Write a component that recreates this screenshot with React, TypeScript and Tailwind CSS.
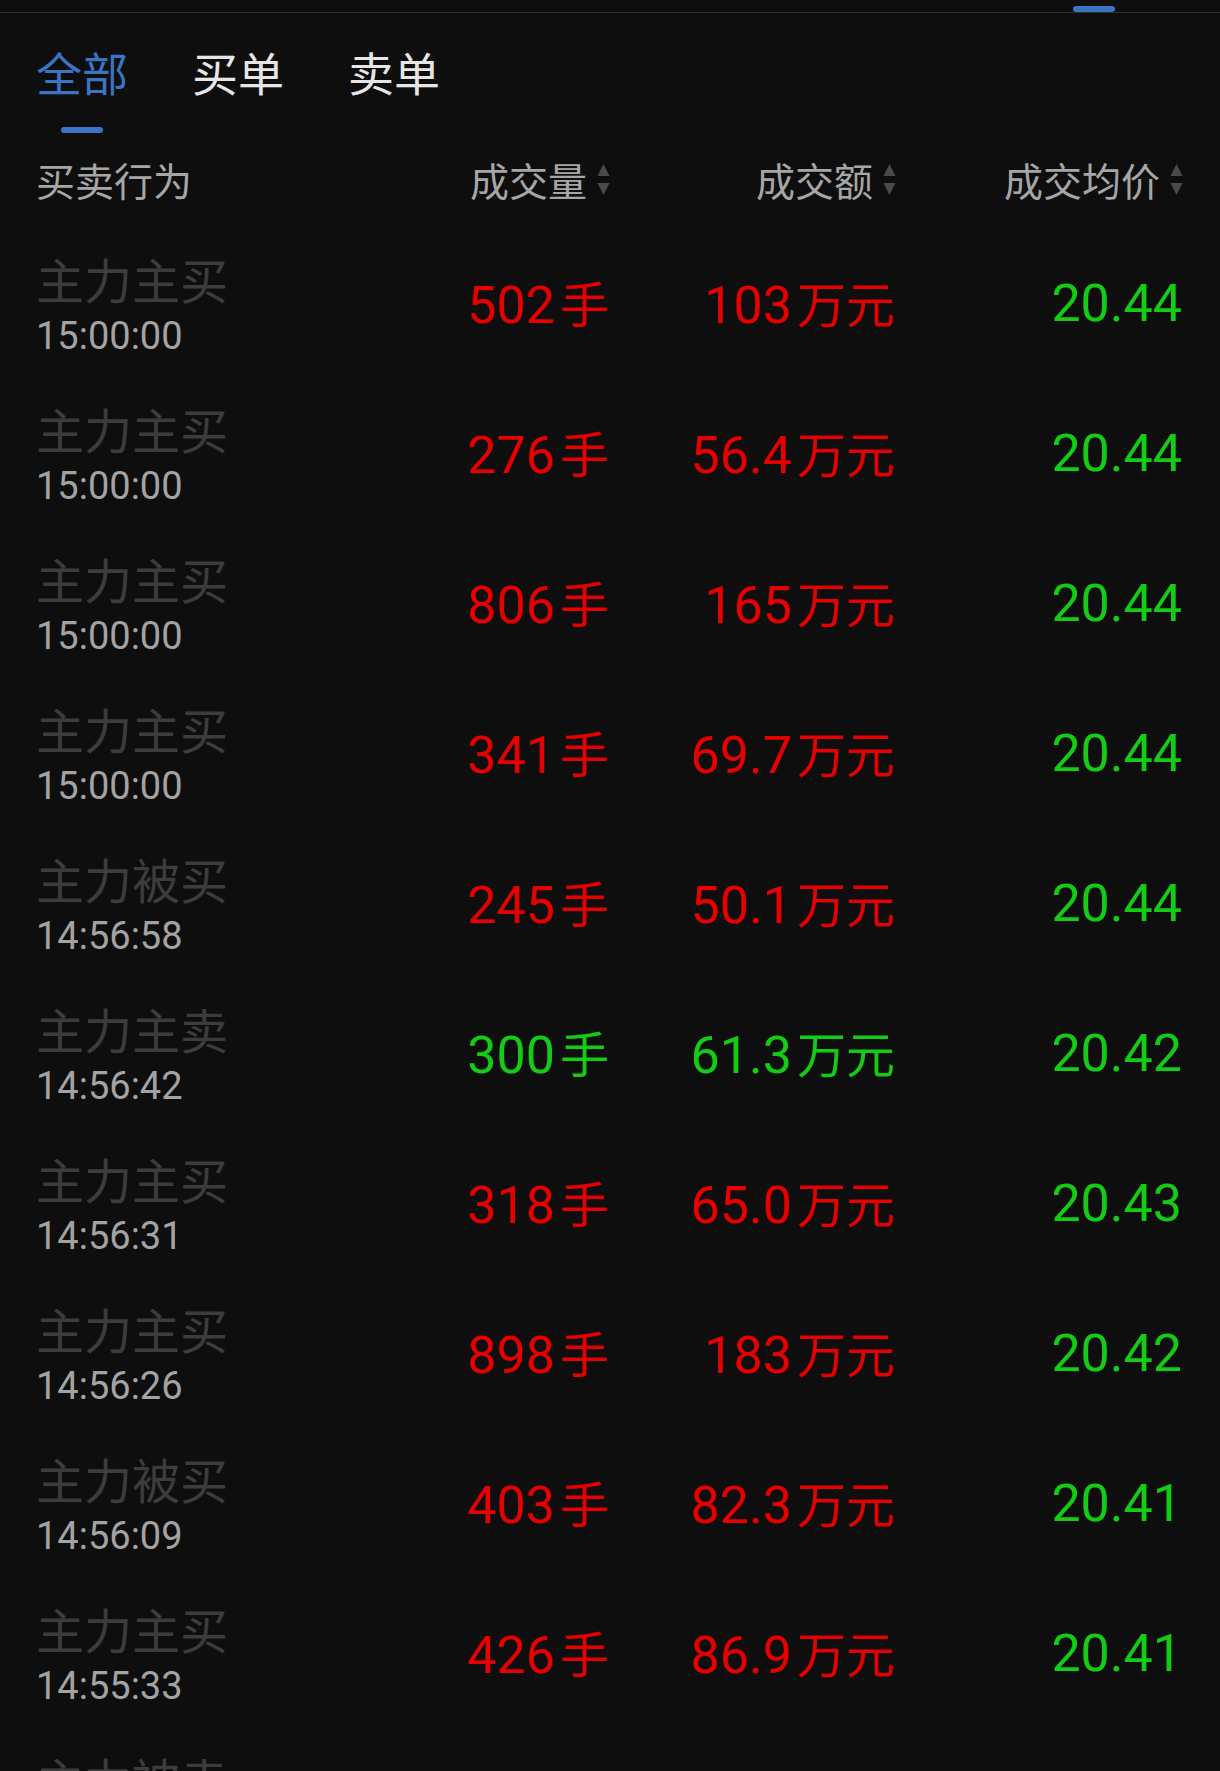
import React from "react";

type Row = {
  label: string;
  time: string;
  vol: string;
  amt: string;
  price: string;
  up: boolean;
};

const rows: Row[] = [
  { label: "主力主买", time: "15:00:00", vol: "502", amt: "103", price: "20.44", up: true },
  { label: "主力主买", time: "15:00:00", vol: "276", amt: "56.4", price: "20.44", up: true },
  { label: "主力主买", time: "15:00:00", vol: "806", amt: "165", price: "20.44", up: true },
  { label: "主力主买", time: "15:00:00", vol: "341", amt: "69.7", price: "20.44", up: true },
  { label: "主力被买", time: "14:56:58", vol: "245", amt: "50.1", price: "20.44", up: true },
  { label: "主力主卖", time: "14:56:42", vol: "300", amt: "61.3", price: "20.42", up: false },
  { label: "主力主买", time: "14:56:31", vol: "318", amt: "65.0", price: "20.43", up: true },
  { label: "主力主买", time: "14:56:26", vol: "898", amt: "183", price: "20.42", up: true },
  { label: "主力被买", time: "14:56:09", vol: "403", amt: "82.3", price: "20.41", up: true },
  { label: "主力主买", time: "14:55:33", vol: "426", amt: "86.9", price: "20.41", up: true },
  { label: "主力被卖", time: "14:55:12", vol: "512", amt: "104", price: "20.41", up: false },
];

const CJK = "font-['Noto_Sans_CJK_SC',sans-serif]";
const NUM = "font-['Roboto','Noto_Sans_CJK_SC',sans-serif]";

function SortIcon() {
  return (
    <svg width="13" height="33" viewBox="0 0 13 33" className="ml-[10px] shrink-0">
      <path d="M6.5 1 L12.5 13 L0.5 13 Z" fill="#4a4a4a" />
      <path d="M0.5 20 L12.5 20 L6.5 32 Z" fill="#4a4a4a" />
    </svg>
  );
}

function Value({ num, unit, up }: { num: string; unit: string; up: boolean }) {
  const color = up ? "text-[#e60000]" : "text-[#14cc14]";
  return (
    <div className={`flex items-baseline justify-end ${color}`}>
      <span className={`${NUM} text-[52px] leading-none`}>{num}</span>
      <span className={`${CJK} text-[49px] leading-none ml-[5px]`}>{unit}</span>
    </div>
  );
}

export default function App() {
  return (
    <div className="w-[1220px] h-[1771px] overflow-hidden bg-[#0e0e0e]">
      <div className="relative h-[12px]">
        <div className="absolute left-[1073px] bottom-0 w-[42px] h-[6px] rounded-full bg-[#3a74c2]" />
      </div>
      <div className="h-px bg-[#2e2e2e]" />

      {/* tabs */}
      <div className="flex h-[127px] pl-[36px] gap-[64px]">
        {[
          { t: "全部", active: true },
          { t: "买单", active: false },
          { t: "卖单", active: false },
        ].map((tab) => (
          <div key={tab.t} className="flex flex-col items-center pt-[31px]">
            <span
              className={`${CJK} text-[46px] leading-[54px] ${
                tab.active ? "text-[#3a74c2]" : "text-[#e6e6e6]"
              }`}
            >
              {tab.t}
            </span>
            {tab.active && (
              <div className="mt-[29px] w-[42px] h-[6px] rounded-full bg-[#3a74c2]" />
            )}
          </div>
        ))}
      </div>

      {/* header */}
      <div
        className={`grid grid-cols-[1fr_250px_286px_287px] items-center h-[89px] pb-[10px] pl-[36px] pr-[37px] ${CJK} text-[39px] leading-none text-[#a6a6a6]`}
      >
        <div>买卖行为</div>
        <div className="flex items-center justify-end">
          成交量
          <SortIcon />
        </div>
        <div className="flex items-center justify-end">
          成交额
          <SortIcon />
        </div>
        <div className="flex items-center justify-end">
          成交均价
          <SortIcon />
        </div>
      </div>

      {/* rows */}
      <div className="flex flex-col">
        {rows.map((r, i) => (
          <div
            key={i}
            className="grid grid-cols-[1fr_250px_286px_287px] items-center h-[150px] pl-[36px] pr-[38px]"
          >
            <div className="flex flex-col">
              <span className={`${CJK} text-[48px] leading-[48px] text-[#3c3c3c]`}>{r.label}</span>
              <span className={`${NUM} text-[38px] leading-[38px] text-[#a3a3a3] mt-[15px]`}>
                {r.time}
              </span>
            </div>
            <Value num={r.vol} unit="手" up={r.up} />
            <Value num={r.amt} unit="万元" up={r.up} />
            <div className={`${NUM} text-right text-[52px] leading-none text-[#14cc14]`}>{r.price}</div>
          </div>
        ))}
      </div>
    </div>
  );
}
